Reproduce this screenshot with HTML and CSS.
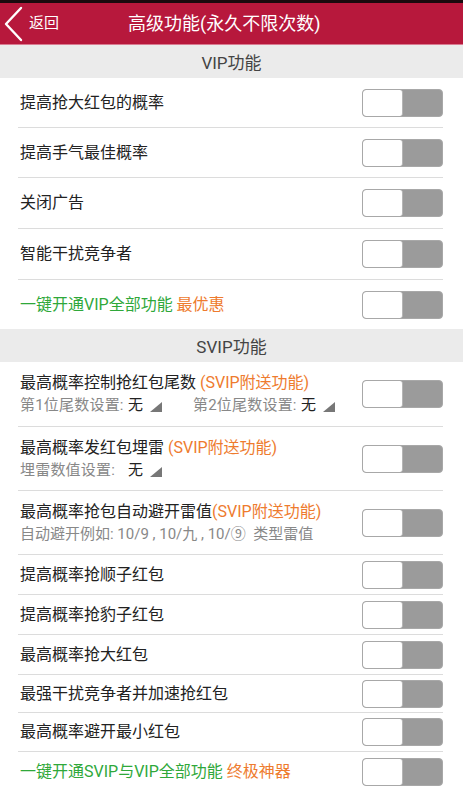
FILE: index.html
```html
<!DOCTYPE html>
<html lang="zh-CN">
<head>
<meta charset="utf-8">
<title>高级功能</title>
<link rel="stylesheet" href="styles.css">
</head>
<body>
<header class="topbar">
  <div class="back">
    <svg class="chev" width="22" height="36" viewBox="0 0 22 36"><polyline points="18,2 3,18 18,34" fill="none" stroke="#fff" stroke-width="2.4" stroke-linecap="round" stroke-linejoin="round"/></svg>
    <span class="back-text">返回</span>
  </div>
  <div class="title">高级功能(永久不限次数)</div>
</header>

<div class="section">VIP功能</div>
<div class="row h50"><span class="label">提高抢大红包的概率</span><span class="switch"><i></i></span></div>
<div class="row h50"><span class="label">提高手气最佳概率</span><span class="switch"><i></i></span></div>
<div class="row h51"><span class="label">关闭广告</span><span class="switch"><i></i></span></div>
<div class="row h51"><span class="label">智能干扰竞争者</span><span class="switch"><i></i></span></div>
<div class="row h49 last"><span class="label"><span class="green">一键开通VIP全部功能</span> <span class="orange">最优惠</span></span><span class="switch"><i></i></span></div>

<div class="section">SVIP功能</div>
<div class="row h65">
  <div class="stack">
    <span class="label">最高概率控制抢红包尾数 <span class="orange">(SVIP附送功能)</span></span>
    <span class="sub">
      <span class="pick"><span class="plabel">第1位尾数设置:</span><span class="val">无</span><svg class="tri" width="12" height="10" viewBox="0 0 12 10"><polygon points="12,0 12,10 0,10" fill="#777"/></svg></span>
      <span class="pick second"><span class="plabel">第2位尾数设置:</span><span class="val">无</span><svg class="tri" width="12" height="10" viewBox="0 0 12 10"><polygon points="12,0 12,10 0,10" fill="#777"/></svg></span>
    </span>
  </div>
  <span class="switch"><i></i></span>
</div>
<div class="row h64">
  <div class="stack">
    <span class="label">最高概率发红包埋雷 <span class="orange">(SVIP附送功能)</span></span>
    <span class="sub">
      <span class="pick"><span class="plabel">埋雷数值设置:</span><span class="val">无</span><svg class="tri" width="12" height="10" viewBox="0 0 12 10"><polygon points="12,0 12,10 0,10" fill="#777"/></svg></span>
    </span>
  </div>
  <span class="switch"><i></i></span>
</div>
<div class="row h64">
  <div class="stack">
    <span class="label">最高概率抢包自动避开雷值<span class="orange">(SVIP附送功能)</span></span>
    <span class="sub">自动避开例如: 10/9 , 10/九 , 10/⑨&nbsp; 类型雷值</span>
  </div>
  <span class="switch"><i></i></span>
</div>
<div class="row h40"><span class="label">提高概率抢顺子红包</span><span class="switch"><i></i></span></div>
<div class="row h40"><span class="label">提高概率抢豹子红包</span><span class="switch"><i></i></span></div>
<div class="row h40"><span class="label">最高概率抢大红包</span><span class="switch"><i></i></span></div>
<div class="row h38"><span class="label">最强干扰竞争者并加速抢红包</span><span class="switch"><i></i></span></div>
<div class="row h39"><span class="label">最高概率避开最小红包</span><span class="switch"><i></i></span></div>
<div class="row h40 last"><span class="label"><span class="green">一键开通SVIP与VIP全部功能</span> <span class="orange">终极神器</span></span><span class="switch"><i></i></span></div>
</body>
</html>
```

FILE: styles.css
```css
* { box-sizing: border-box; }
html, body { margin: 0; padding: 0; }
body {
  width: 463px;
  background: #fff;
  font-family: Roboto, "Noto Sans CJK SC", "Noto Sans", sans-serif;
  color: #222;
  border-top: 3px solid #1a0a0e;
}
.topbar {
  height: 42px;
  background: #b7183c;
  border-bottom: 1px solid #d97b91;
  display: flex;
  align-items: center;
  color: #fff;
}
.back {
  display: flex;
  align-items: center;
  padding-left: 3px;
  width: 128px;
}
.chev { display: block; }
.back-text {
  font-size: 15px;
  margin-left: 4px;
  line-height: 1;
}
.title {
  font-size: 18px;
  line-height: 1;
}
.section {
  height: 33px;
  background: #ebebeb;
  color: #444;
  font-size: 17px;
  display: flex;
  align-items: center;
  justify-content: center;
}
.row {
  margin: 0 20px 0 18px;
  padding-left: 2px;
  border-bottom: 1px solid #dcdcdc;
  display: flex;
  align-items: center;
  justify-content: space-between;
}
.row.last { border-bottom: none; }
.h38 { height: 38px; }
.h39 { height: 39px; }
.h40 { height: 40px; }
.h49 { height: 49px; }
.h50 { height: 50px; }
.h51 { height: 51px; }
.h64 { height: 64px; }
.h65 { height: 65px; }
.label {
  font-size: 16px;
  line-height: 22px;
  color: #222;
  white-space: nowrap;
}
.green { color: #2fa83a; }
.orange { color: #ee7b2e; }
.stack {
  display: flex;
  flex-direction: column;
}
.sub {
  font-size: 15px;
  line-height: 22px;
  color: #888;
  white-space: nowrap;
  display: flex;
  align-items: center;
}
.pick {
  display: inline-flex;
  align-items: center;
}
.pick.second { margin-left: 31px; }
.plabel {
  width: 108px;
  letter-spacing: 0.2px;
}
.val {
  color: #222;
  font-size: 15px;
  width: 22px;
}
.tri {
  display: block;
  margin-top: 4px;
}
.switch {
  width: 81px;
  height: 28px;
  border: 1px solid #a8a8a8;
  border-radius: 4px;
  background: #9b9b9b;
  display: flex;
  flex: none;
  overflow: hidden;
}
.switch i {
  display: block;
  width: 40px;
  height: 100%;
  background: #fff;
  border-right: 1px solid #b5b5b5;
  border-radius: 3px;
}
```
